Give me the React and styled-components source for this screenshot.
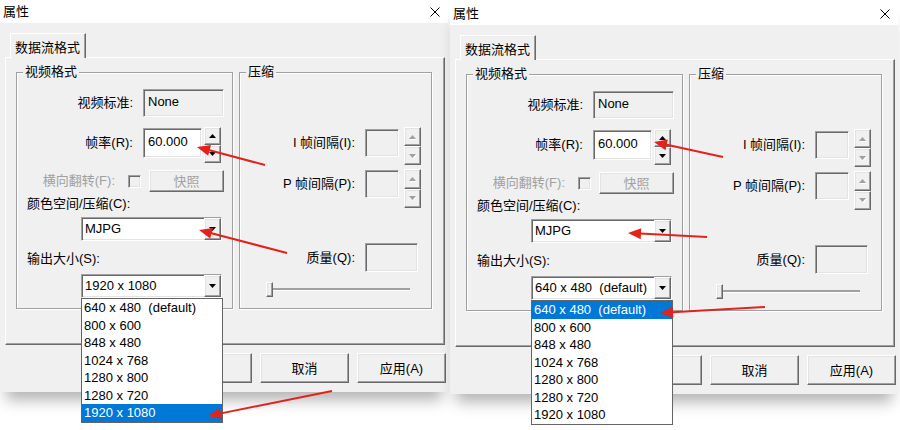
import React from "react";
import styled, { createGlobalStyle, css } from "styled-components";

const Global = createGlobalStyle`
  html, body { margin: 0; padding: 0; background: #fff; }
  body {
    font-family: "Liberation Sans", "Noto Sans CJK SC", sans-serif;
    font-size: 13px;
    color: #000;
    overflow: hidden;
  }
  * { box-sizing: border-box; }
`;

const raised = css`
  border: 1px solid;
  border-color: #fff #696969 #696969 #fff;
  box-shadow: inset -1px -1px #a0a0a0, inset 1px 1px #e3e3e3;
`;

const sunken = css`
  border: 1px solid;
  border-color: #a0a0a0 #fff #fff #a0a0a0;
  box-shadow: inset 1px 1px #696969, inset -1px -1px #e3e3e3;
`;

const Page = styled.div`
  display: flex;
  align-items: flex-start;
  gap: 2px;
  width: 900px;
  height: 430px;
`;

const Dialog = styled.section`
  position: relative;
  width: 448px;
  flex: none;
  margin-top: ${(p) => p.$drop}px;
  display: flex;
  flex-direction: column;
  box-shadow: 0 14px 14px -6px rgba(0, 0, 0, 0.3);
`;

const TitleBar = styled.header`
  height: 23px;
  background: #fff;
  display: flex;
  align-items: center;
  justify-content: space-between;
  padding: 0 8px 0 3px;
`;

const Caption = styled.span`
  font-size: 13px;
  line-height: 16px;
`;

const Body = styled.div`
  background: #f0f0f0;
  padding: 10px 2px 9px 5px;
  display: flex;
  flex-direction: column;
`;

const TabStrip = styled.div`
  display: flex;
  padding-left: 5px;
  position: relative;
  z-index: 1;
  margin-bottom: -1px;
`;

const Tab = styled.div`
  height: 25px;
  padding: 0 5px 0 4px;
  display: flex;
  align-items: center;
  background: #f0f0f0;
  border: 1px solid;
  border-color: #fff #696969 transparent #fff;
  border-bottom: none;
  box-shadow: inset -1px 0 #a0a0a0;
`;

const Panel = styled.div`
  width: 440px;
  height: 288px;
  border: 1px solid;
  border-color: #fff #696969 #696969 #fff;
  box-shadow: inset -1px -1px #a0a0a0;
  padding: 14px 0 0 10px;
  display: flex;
  align-items: flex-start;
  gap: 6px;
`;

const Group = styled.div`
  position: relative;
  width: ${(p) => p.$w}px;
  height: 237px;
  border: 1px solid #a0a0a0;
  box-shadow: 1px 1px #fff, inset 1px 1px #fff;
  padding-top: ${(p) => p.$pt}px;
  display: flex;
  flex-direction: column;
  align-items: flex-start;
`;

const Legend = styled.span`
  position: absolute;
  top: -9px;
  left: 6px;
  padding: 0 2px;
  line-height: 16px;
  background: #f0f0f0;
`;

const FieldRow = styled.div`
  display: flex;
  align-items: ${(p) => p.$align || "center"};
  margin-top: ${(p) => p.$mt || 0}px;
`;

const FieldLabel = styled.label`
  flex: none;
  width: ${(p) => p.$w}px;
  height: ${(p) => (p.$h ? `${p.$h}px` : "auto")};
  margin-top: ${(p) => p.$mt || 0}px;
  margin-right: ${(p) => p.$gap ?? 10}px;
  display: flex;
  align-items: center;
  justify-content: flex-end;
  line-height: 16px;
  white-space: nowrap;
  color: ${(p) => (p.$disabled ? "#a0a0a0" : "#000")};
`;

const CaptionLabel = styled.label`
  margin-top: ${(p) => p.$mt}px;
  padding-left: 10px;
  line-height: 16px;
`;

const FieldBox = styled.div`
  flex: none;
  width: ${(p) => p.$w}px;
  height: ${(p) => p.$h}px;
  margin-top: ${(p) => p.$mt || 0}px;
  ${sunken};
  background: ${(p) => (p.$editable ? "#fff" : "#f0f0f0")};
  padding: 0 0 2px 4px;
  display: flex;
  align-items: center;
  line-height: 16px;
`;

const Spin = styled.div`
  flex: none;
  width: 17px;
  height: ${(p) => p.$h}px;
  margin-left: ${(p) => p.$ml}px;
  display: flex;
  flex-direction: column;
`;

const SpinButton = styled.div`
  flex: 1;
  ${raised};
  background: #f0f0f0;
  display: flex;
  align-items: center;
  justify-content: center;
`;

const CheckBox = styled.span`
  flex: none;
  width: 13px;
  height: 13px;
  ${sunken};
  background: #f0f0f0;
`;

const PushButton = styled.button`
  flex: none;
  width: ${(p) => p.$w}px;
  height: ${(p) => p.$h}px;
  margin-left: ${(p) => p.$ml || 0}px;
  ${raised};
  background: #f0f0f0;
  font: inherit;
  color: #000;
  padding: 0 0 2px;
  &:disabled {
    color: #a3a3a3;
  }
`;

const ComboBox = styled.div`
  position: relative;
  width: 141px;
  height: 24px;
  margin: ${(p) => p.$mt}px 0 0 64px;
  ${sunken};
  background: #fff;
  display: flex;
  align-items: stretch;
`;

const ComboText = styled.span`
  flex: 1;
  padding: 0 0 1px 3px;
  display: flex;
  align-items: center;
  white-space: pre;
`;

const DropButton = styled.span`
  flex: none;
  width: 17px;
  ${raised};
  background: #f0f0f0;
  display: flex;
  align-items: center;
  justify-content: center;
`;

const DropList = styled.ul`
  position: absolute;
  top: calc(100% + 1px);
  left: -1px;
  z-index: 10;
  width: 142px;
  margin: 0;
  padding: 0;
  list-style: none;
  background: #fff;
  border: 1px solid #646464;
`;

const DropItem = styled.li`
  height: 17.5px;
  line-height: 17px;
  padding-left: 2px;
  white-space: pre;
  background: ${(p) => (p.$selected ? "#0078d7" : "transparent")};
  color: ${(p) => (p.$selected ? "#fff" : "#000")};
`;

const Slider = styled.div`
  width: 144px;
  height: 15px;
  margin: 10px 0 0 26px;
  display: flex;
  align-items: center;
`;

const SliderThumb = styled.span`
  flex: none;
  width: 7px;
  height: 15px;
  ${raised};
  background: #f0f0f0;
`;

const SliderTrack = styled.span`
  flex: 1;
  height: 3px;
  background: #a0a0a0;
  border-bottom: 1px solid #fff;
`;

const ButtonRow = styled.div`
  display: flex;
  justify-content: flex-end;
  gap: 8px;
  margin-top: 8px;
`;

const Annotations = styled.svg`
  position: absolute;
  top: 0;
  left: 0;
  width: 448px;
  height: 430px;
  overflow: visible;
  pointer-events: none;
  z-index: 20;
`;

const CloseIcon = () => (
  <svg width="10" height="10" viewBox="0 0 10 10">
    <path d="M0.5 0.5L9.5 9.5M9.5 0.5L0.5 9.5" stroke="#000" strokeWidth="1" />
  </svg>
);

const Triangle = ({ up, disabled }) => (
  <svg width="7" height="4" viewBox="0 0 7 4" style={{ overflow: "visible" }}>
    {disabled && (
      <path d={up ? "M1 5H8L4.5 1Z" : "M1 1H8L4.5 5Z"} fill="#fff" />
    )}
    <path d={up ? "M0 4H7L3.5 0Z" : "M0 0H7L3.5 4Z"} fill={disabled ? "#a0a0a0" : "#000"} />
  </svg>
);

function SpinControl({ h, ml, disabled }) {
  return (
    <Spin $h={h} $ml={ml}>
      <SpinButton>
        <Triangle up disabled={disabled} />
      </SpinButton>
      <SpinButton>
        <Triangle disabled={disabled} />
      </SpinButton>
    </Spin>
  );
}

function Arrow({ from, to }) {
  const [x1, y1] = from;
  const [x2, y2] = to;
  const len = Math.hypot(x2 - x1, y2 - y1);
  const ux = (x2 - x1) / len;
  const uy = (y2 - y1) / len;
  const head = 13;
  const half = 5.5;
  const bx = x2 - ux * head;
  const by = y2 - uy * head;
  const px = -uy * half;
  const py = ux * half;
  return (
    <g>
      <line x1={x1} y1={y1} x2={bx + ux} y2={by + uy} stroke="#e3221c" strokeWidth="2" />
      <polygon
        points={`${x2},${y2} ${bx + px},${by + py} ${bx - px},${by - py}`}
        fill="#e3221c"
      />
    </g>
  );
}

const SIZES = [
  "640 x 480  (default)",
  "800 x 600",
  "848 x 480",
  "1024 x 768",
  "1280 x 800",
  "1280 x 720",
  "1920 x 1080",
];

function PropertiesDialog({ drop, selected, arrows }) {
  return (
    <Dialog $drop={drop}>
      <TitleBar>
        <Caption>属性</Caption>
        <CloseIcon />
      </TitleBar>
      <Body>
        <TabStrip>
          <Tab>数据流格式</Tab>
        </TabStrip>
        <Panel>
          <Group $w={217} $pt={16}>
            <Legend>视频格式</Legend>
            <FieldRow>
              <FieldLabel $w={116}>视频标准:</FieldLabel>
              <FieldBox $w={81} $h={28}>None</FieldBox>
            </FieldRow>
            <FieldRow $mt={10} $align="flex-start">
              <FieldLabel $w={116} $h={30} $mt={1}>帧率(R):</FieldLabel>
              <FieldBox $w={59} $h={30} $mt={1} $editable>60.000</FieldBox>
              <SpinControl h={36} ml={2} />
            </FieldRow>
            <FieldRow $mt={7}>
              <FieldLabel $w={98} $gap={13} $disabled>横向翻转(F):</FieldLabel>
              <CheckBox />
              <PushButton $w={75} $h={22} $ml={8} disabled>快照</PushButton>
            </FieldRow>
            <CaptionLabel $mt={4}>颜色空间/压缩(C):</CaptionLabel>
            <ComboBox $mt={5}>
              <ComboText>MJPG</ComboText>
              <DropButton>
                <Triangle />
              </DropButton>
            </ComboBox>
            <CaptionLabel $mt={10}>输出大小(S):</CaptionLabel>
            <ComboBox $mt={7}>
              <ComboText>{SIZES[selected]}</ComboText>
              <DropButton>
                <Triangle />
              </DropButton>
              <DropList>
                {SIZES.map((s, i) => (
                  <DropItem key={s} $selected={i === selected}>
                    {s}
                  </DropItem>
                ))}
              </DropList>
            </ComboBox>
          </Group>
          <Group $w={193} $pt={54}>
            <Legend>压缩</Legend>
            <FieldRow $align="flex-start">
              <FieldLabel $w={115} $h={28} $mt={2}>I 帧间隔(I):</FieldLabel>
              <FieldBox $w={34} $h={28} $mt={2} />
              <SpinControl h={38} ml={5} disabled />
            </FieldRow>
            <FieldRow $mt={4} $align="flex-start">
              <FieldLabel $w={115} $h={28} $mt={1}>P 帧间隔(P):</FieldLabel>
              <FieldBox $w={34} $h={28} $mt={1} />
              <SpinControl h={39} ml={5} disabled />
            </FieldRow>
            <FieldRow $mt={35}>
              <FieldLabel $w={115}>质量(Q):</FieldLabel>
              <FieldBox $w={53} $h={29} />
            </FieldRow>
            <Slider>
              <SliderThumb />
              <SliderTrack />
            </Slider>
          </Group>
        </Panel>
        <ButtonRow>
          <PushButton $w={89} $h={30}>确定</PushButton>
          <PushButton $w={89} $h={30}>取消</PushButton>
          <PushButton $w={89} $h={30}>应用(A)</PushButton>
        </ButtonRow>
      </Body>
      <Annotations>
        {arrows.map((a, i) => (
          <Arrow key={i} from={a[0]} to={a[1]} />
        ))}
      </Annotations>
    </Dialog>
  );
}

export default function App() {
  return (
    <>
      <Global />
      <Page>
        <PropertiesDialog
          drop={0}
          selected={6}
          arrows={[
            [[265, 165], [197, 147]],
            [[287, 253], [199, 230]],
            [[332, 391], [208, 416]],
          ]}
        />
        <PropertiesDialog
          drop={2}
          selected={0}
          arrows={[
            [[273, 155], [204, 140]],
            [[257, 235], [178, 231]],
            [[315, 305], [210, 311]],
          ]}
        />
      </Page>
    </>
  );
}
